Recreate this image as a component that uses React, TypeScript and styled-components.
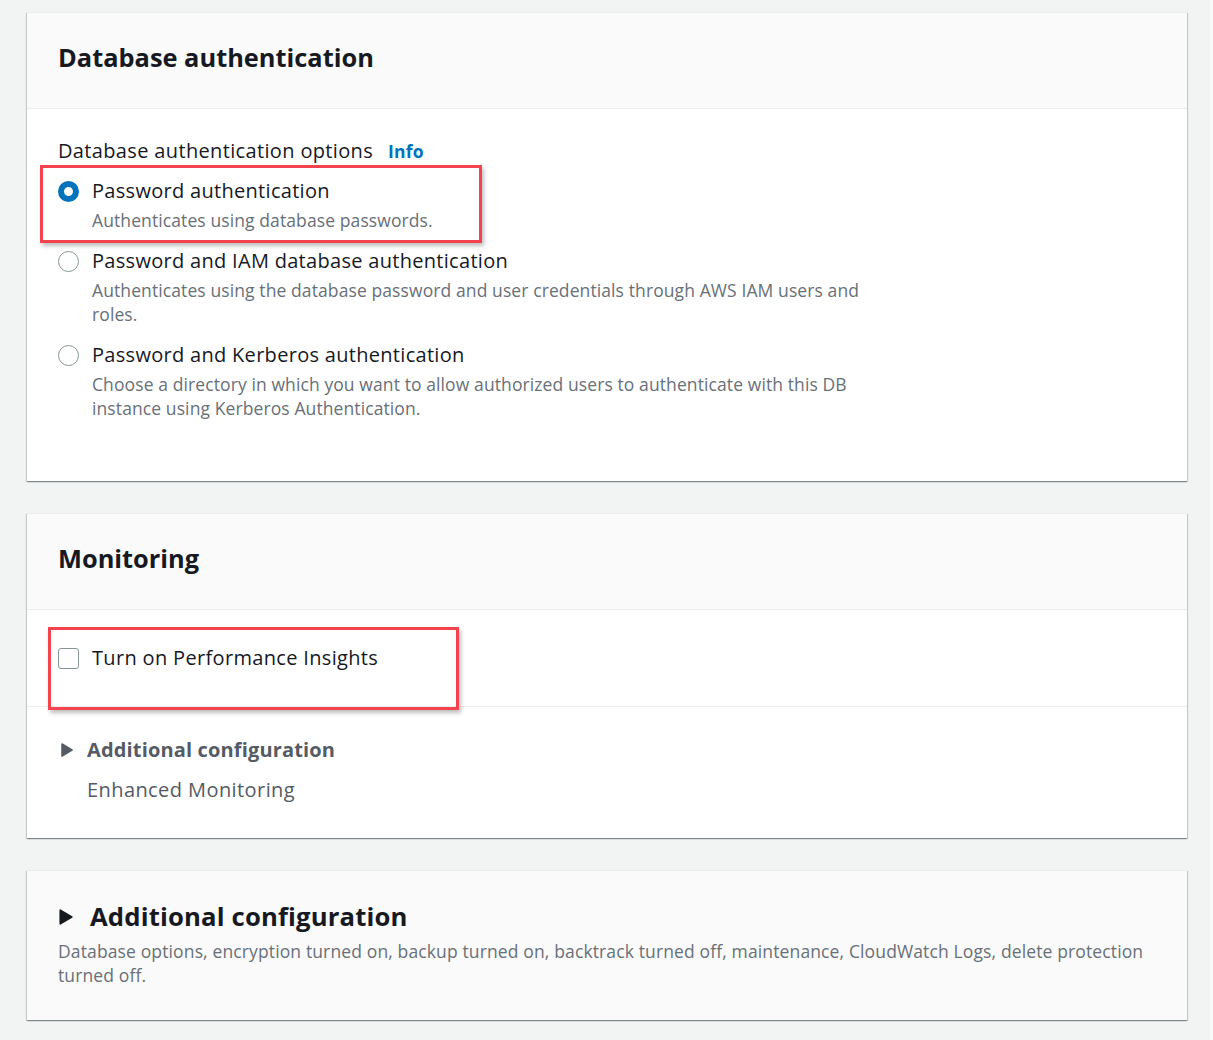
import React from "react";
import styled, { createGlobalStyle } from "styled-components";

const Global = createGlobalStyle`
  html, body { margin: 0; padding: 0; background: #f2f3f3; }
  body { font-family: "Open Sans", "Noto Sans", Arial, sans-serif; color: #16191f; }
`;

const Page = styled.div`
  width: 1213px;
  height: 1040px;
  box-sizing: border-box;
  padding: 12px 26px 0 27px;
  display: flex;
  flex-direction: column;
  gap: 32px;
  overflow: hidden;
  box-shadow: inset -3px 0 0 #f8f8f8;
`;

const Card = styled.section<{ $tint?: boolean }>`
  background: ${(p) => (p.$tint ? "#fafafa" : "#ffffff")};
  border-top: 1px solid #eaeded;
  box-shadow: 0 1px 1px 0 rgba(0, 28, 36, 0.3), 1px 1px 1px 0 rgba(0, 28, 36, 0.15),
    -1px 1px 1px 0 rgba(0, 28, 36, 0.15);
`;

const CardHeader = styled.header`
  height: 96px;
  box-sizing: border-box;
  padding: 0 31px 8px;
  display: flex;
  align-items: center;
  background: #fafafa;
  border-bottom: 1px solid #eaeded;
`;

const Title = styled.h2`
  margin: 0;
  font-size: 25.4px;
  line-height: 32px;
  font-weight: 700;
  color: #16191f;
`;

const Body = styled.div<{ $pad: string }>`
  padding: ${(p) => p.$pad};
  position: relative;
`;

const Divider = styled.div`
  border-top: 1px solid #eaeded;
`;

const FieldLabel = styled.div`
  font-size: 20px;
  line-height: 24px;
  letter-spacing: 0.35px;
  margin-bottom: 15px;
  display: flex;
  align-items: baseline;
  gap: 15px;
`;

const InfoLink = styled.span`
  color: #0073bb;
  font-weight: 700;
  font-size: 17.5px;
  letter-spacing: 0.2px;
`;

const Options = styled.div`
  display: flex;
  flex-direction: column;
  gap: 16px;
`;

const Option = styled.div`
  position: relative;
  display: grid;
  grid-template-columns: 34px 1fr;
`;

const Radio = styled.span<{ $checked?: boolean }>`
  width: 21px;
  height: 21px;
  box-sizing: border-box;
  border-radius: 50%;
  margin-top: 3px;
  border: ${(p) => (p.$checked ? "6.5px solid #0073bb" : "1.5px solid #879596")};
  background: #fff;
`;

const OptionText = styled.div`
  display: flex;
  flex-direction: column;
  gap: 4px;
  max-width: 790px;
`;

const OptionLabel = styled.div`
  font-size: 20px;
  line-height: 26px;
  letter-spacing: 0.3px;
  color: #16191f;
`;

const Description = styled.div`
  font-size: 17.5px;
  line-height: 24px;
  letter-spacing: 0.1px;
  color: #687078;
`;

const Highlight = styled.div<{ $l: number; $t: number; $w: number; $h: number }>`
  position: absolute;
  left: ${(p) => p.$l}px;
  top: ${(p) => p.$t}px;
  width: ${(p) => p.$w}px;
  height: ${(p) => p.$h}px;
  box-sizing: border-box;
  border: 3px solid #f4434c;
  box-shadow: 2px 3px 4px rgba(0, 0, 0, 0.25);
  pointer-events: none;
  z-index: 2;
`;

const CheckRow = styled.div`
  display: flex;
  align-items: center;
  gap: 13px;
`;

const CheckBox = styled.span`
  width: 21px;
  height: 21px;
  box-sizing: border-box;
  border: 1.5px solid #879596;
  border-radius: 3px;
  background: #fff;
`;

const CheckLabel = styled.span`
  font-size: 20px;
  line-height: 26px;
  letter-spacing: 0.33px;
`;

const ExpanderHead = styled.div<{ $big?: boolean }>`
  display: flex;
  align-items: center;
  gap: ${(p) => (p.$big ? "17px" : "14px")};
  font-weight: 700;
  font-size: ${(p) => (p.$big ? "25.7px" : "20px")};
  line-height: ${(p) => (p.$big ? "32px" : "26px")};
  letter-spacing: 0.15px;
  color: ${(p) => (p.$big ? "#16191f" : "#545b64")};
  margin-left: ${(p) => (p.$big ? "1px" : "3px")};
`;

const SubText = styled.div`
  margin-top: 14px;
  padding-left: 29px;
  font-size: 20px;
  line-height: 26px;
  letter-spacing: 0.42px;
  color: #545b64;
`;

const BigDesc = styled.div`
  margin-top: 6px;
  font-size: 17.5px;
  line-height: 24px;
  letter-spacing: 0.13px;
  color: #687078;
`;

const Caret = ({ color, big }: { color: string; big?: boolean }) => (
  <svg width={big ? 14 : 12} height={big ? 16 : 14} viewBox="0 0 12 14" aria-hidden>
    <path d="M1 1 L11 7 L1 13 Z" fill={color} stroke={color} strokeWidth="1.5" strokeLinejoin="round" />
  </svg>
);

export default function App() {
  return (
    <>
      <Global />
      <Page>
        <Card>
          <CardHeader>
            <Title>Database authentication</Title>
          </CardHeader>
          <Body $pad="30px 31px 61px">
            <FieldLabel>
              Database authentication options <InfoLink>Info</InfoLink>
            </FieldLabel>
            <Options>
              <Option>
                <Highlight $l={-18} $t={-13} $w={442} $h={78} />
                <Radio $checked />
                <OptionText>
                  <OptionLabel>Password authentication</OptionLabel>
                  <Description>Authenticates using database passwords.</Description>
                </OptionText>
              </Option>
              <Option>
                <Radio />
                <OptionText>
                  <OptionLabel>Password and IAM database authentication</OptionLabel>
                  <Description>
                    Authenticates using the database password and user credentials through AWS IAM users and roles.
                  </Description>
                </OptionText>
              </Option>
              <Option>
                <Radio />
                <OptionText>
                  <OptionLabel>Password and Kerberos authentication</OptionLabel>
                  <Description>
                    Choose a directory in which you want to allow authorized users to authenticate with this DB instance
                    using Kerberos Authentication.
                  </Description>
                </OptionText>
              </Option>
            </Options>
          </Body>
        </Card>

        <Card>
          <CardHeader>
            <Title>Monitoring</Title>
          </CardHeader>
          <Body $pad="35px 31px 35px">
            <Highlight $l={21} $t={17} $w={411} $h={83} />
            <CheckRow>
              <CheckBox />
              <CheckLabel>Turn on Performance Insights</CheckLabel>
            </CheckRow>
          </Body>
          <Divider />
          <Body $pad="30px 31px 35px">
            <ExpanderHead>
              <Caret color="#545b64" />
              Additional configuration
            </ExpanderHead>
            <SubText>Enhanced Monitoring</SubText>
          </Body>
        </Card>

        <Card $tint>
          <Body $pad="30px 31px 33px">
            <ExpanderHead $big>
              <Caret color="#16191f" big />
              Additional configuration
            </ExpanderHead>
            <BigDesc>
              Database options, encryption turned on, backup turned on, backtrack turned off, maintenance, CloudWatch
              Logs, delete protection turned off.
            </BigDesc>
          </Body>
        </Card>
      </Page>
    </>
  );
}
